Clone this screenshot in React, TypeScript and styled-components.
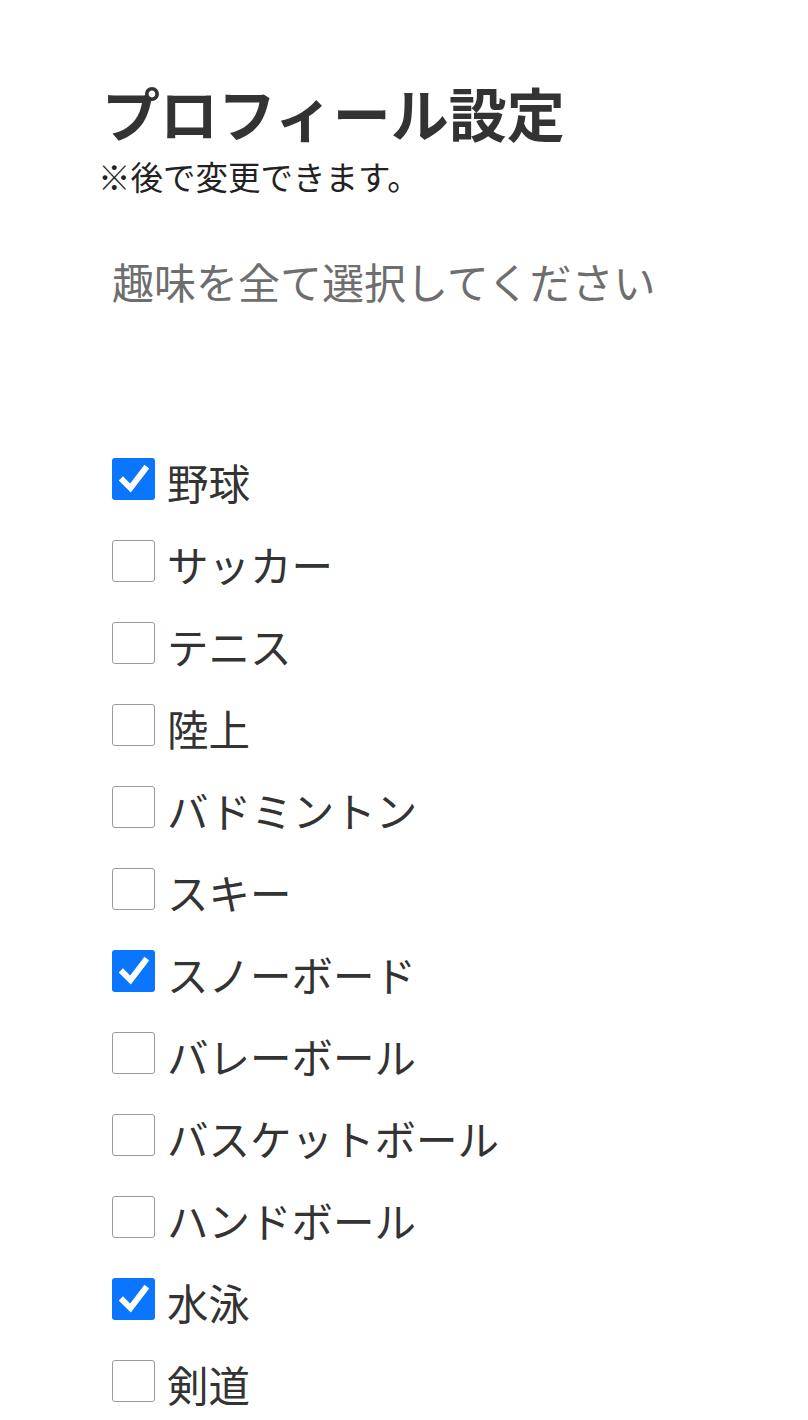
import React, { useState } from 'react';
import styled, { createGlobalStyle } from 'styled-components';

const GlobalStyle = createGlobalStyle`
  html, body {
    margin: 0;
    padding: 0;
    background: #fff;
  }
  body {
    font-family: "Noto Sans CJK JP", "Noto Sans", sans-serif;
    color: #333;
  }
`;

const Page = styled.div`
  padding: 79px 0 0 100px;
`;

const Title = styled.h1`
  margin: 0 0 0 2px;
  font-size: 58px;
  font-weight: 700;
  line-height: 66px;
  color: #333;
`;

const Note = styled.p`
  margin: 11px 0 0 -2px;
  font-size: 32.5px;
  line-height: 40px;
  color: #222;
`;

const Lead = styled.p`
  margin: 55px 0 0 12px;
  font-size: 42px;
  line-height: 60px;
  color: #6e6e6e;
`;

const List = styled.ul`
  list-style: none;
  margin: 147px 0 0 12px;
  padding: 0;
`;

const Row = styled.li`
  height: 82px;
  display: flex;
  align-items: flex-start;
`;

const Box = styled.span<{ $checked: boolean }>`
  box-sizing: border-box;
  width: 43px;
  height: 42px;
  border-radius: 3px;
  flex: none;
  display: flex;
  align-items: center;
  justify-content: center;
  background: ${(p) => (p.$checked ? '#0a76ff' : '#fff')};
  border: ${(p) => (p.$checked ? 'none' : '1.5px solid #9a9a9a')};
  cursor: pointer;
`;

const Label = styled.label`
  margin-left: 12px;
  margin-top: -5px;
  font-size: 41.5px;
  line-height: 58px;
  color: #333;
  cursor: pointer;
`;

const hobbies = [
  '野球',
  'サッカー',
  'テニス',
  '陸上',
  'バドミントン',
  'スキー',
  'スノーボード',
  'バレーボール',
  'バスケットボール',
  'ハンドボール',
  '水泳',
  '剣道',
];

function Check() {
  return (
    <svg width="30" height="30" viewBox="0 0 30 30">
      <path d="M4 16.5 L11.5 24 L26 5" fill="none" stroke="#fff" strokeWidth="6" strokeLinecap="square" />
    </svg>
  );
}

export default function App() {
  const [selected, setSelected] = useState<string[]>(['野球', 'スノーボード', '水泳']);

  const toggle = (name: string) => {
    setSelected((s) => (s.includes(name) ? s.filter((n) => n !== name) : [...s, name]));
  };

  return (
    <>
      <GlobalStyle />
      <Page>
        <Title>プロフィール設定</Title>
        <Note>※後で変更できます。</Note>
        <Lead>趣味を全て選択してください</Lead>
        <List>
          {hobbies.map((h) => {
            const checked = selected.includes(h);
            return (
              <Row key={h}>
                <Box $checked={checked} onClick={() => toggle(h)}>
                  {checked && <Check />}
                </Box>
                <Label onClick={() => toggle(h)}>{h}</Label>
              </Row>
            );
          })}
        </List>
      </Page>
    </>
  );
}
